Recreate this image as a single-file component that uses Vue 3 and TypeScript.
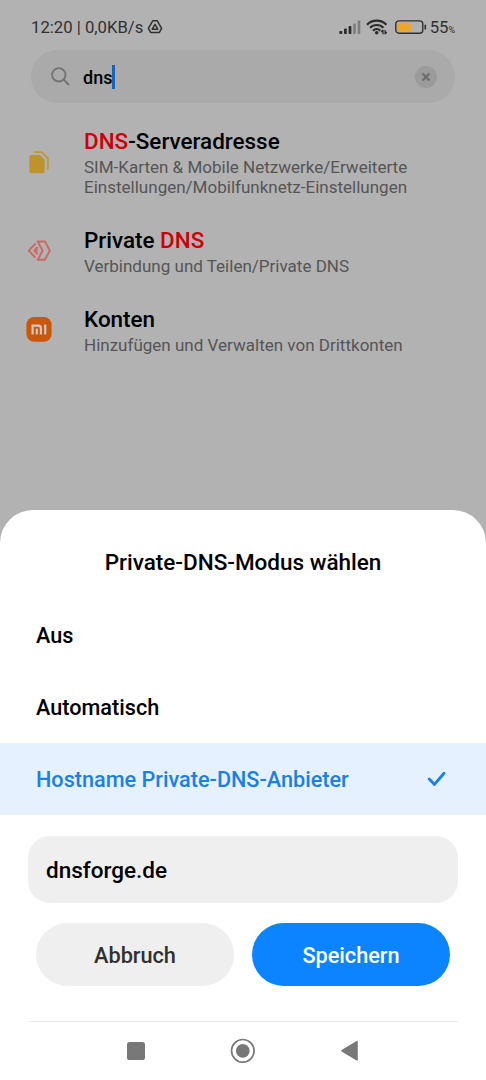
<script setup lang="ts">
import { ref } from 'vue'

interface Part {
  text: string
  hit?: boolean
}
interface Result {
  icon: 'sim' | 'share' | 'mi'
  title: Part[]
  path: string[]
}

const results: Result[] = [
  {
    icon: 'sim',
    title: [{ text: 'DNS', hit: true }, { text: '-Serveradresse' }],
    path: ['SIM-Karten & Mobile Netzwerke/Erweiterte', 'Einstellungen/Mobilfunknetz-Einstellungen'],
  },
  {
    icon: 'share',
    title: [{ text: 'Private ' }, { text: 'DNS', hit: true }],
    path: ['Verbindung und Teilen/Private DNS'],
  },
  {
    icon: 'mi',
    title: [{ text: 'Konten' }],
    path: ['Hinzufügen und Verwalten von Drittkonten'],
  },
]

const modes: string[] = ['Aus', 'Automatisch', 'Hostname Private-DNS-Anbieter']
const selected = ref<number>(2)
</script>

<template>
  <div class="screen">
    <header class="status">
      <span class="clock">12:20 | 0,0KB/s</span>
      <svg class="tri" width="16" height="16" viewBox="0 0 16 16">
        <path d="M5.700 1.800h4.600l4.300 7.600-2.200 4H3.600l-2.200-4z" fill="none" stroke="#303030" stroke-width="1.500" stroke-linejoin="round" />
        <path d="M8 5.400l2.800 4.800H5.200z" fill="none" stroke="#303030" stroke-width="1.500" stroke-linejoin="round" />
      </svg>
      <span class="spacer"></span>
      <svg class="signal" width="22" height="15" viewBox="0 0 22 15">
        <g fill="#2c2c2c">
          <rect x="0.300" y="11" width="3" height="3" rx="0.800" />
          <rect x="5" y="8.500" width="2.800" height="5.500" rx="0.800" />
          <rect x="9.600" y="6" width="2.800" height="8" rx="0.800" />
        </g>
        <g fill="#7c7c7c">
          <rect x="14.200" y="3.500" width="2.600" height="10.500" rx="0.800" />
          <rect x="18.700" y="0.500" width="2.600" height="13.500" rx="0.800" />
        </g>
      </svg>
      <svg class="wifi" width="22" height="16" viewBox="0 0 22 16">
        <g fill="none" stroke="#2c2c2c" stroke-width="2.200">
          <path d="M1 5.700a13.600 13.600 0 0 1 19.400 0" />
          <path d="M4 8.800a9.400 9.400 0 0 1 13.400 0" />
          <path d="M7 11.700a5.300 5.300 0 0 1 7.400 0" />
        </g>
        <circle cx="10.700" cy="13.800" r="1.800" fill="#2c2c2c" />
        <path d="M17 10.900v4.300M15.200 13l1.800-2M19.100 10.900v4.300M19.100 15l1.600-2" fill="none" stroke="#2c2c2c" stroke-width="1.300" />
      </svg>
      <svg class="battery" width="32" height="15" viewBox="0 0 32 15">
        <rect x="0.800" y="0.900" width="27" height="12.400" rx="3.200" fill="none" stroke="#303030" stroke-width="1.400" />
        <rect x="2.600" y="2.800" width="13.400" height="8.600" rx="1.600" fill="#eda62c" />
        <path d="M30.300 5.400v3.600" stroke="#303030" stroke-width="1.600" stroke-linecap="round" />
      </svg>
      <span class="pct">55<small>%</small></span>
    </header>

    <div class="search">
      <svg class="lens" width="20" height="20" viewBox="0 0 20 20">
        <circle cx="7.800" cy="7.800" r="6.700" fill="none" stroke="#747474" stroke-width="1.900" />
        <path d="M12.800 12.800l4.700 4.700" stroke="#747474" stroke-width="2" stroke-linecap="round" />
      </svg>
      <span class="query">dns</span>
      <span class="caret"></span>
      <span class="clear">
        <svg width="10" height="10" viewBox="0 0 10 10">
          <path d="M1.500 1.500l7 7M8.500 1.500l-7 7" stroke="#6a6a6a" stroke-width="2" />
        </svg>
      </span>
    </div>

    <ul class="results">
      <li v-for="(r, i) in results" :key="i" class="result">
        <svg v-if="r.icon === 'sim'" class="icon" width="28" height="28" viewBox="0 0 28 28">
          <path d="M9.200 4.200h7.600l6.100 6.200V20a2 2 0 0 1-.7 1.600" fill="none" stroke="#bd963f" stroke-width="1.700" />
          <path d="M6.700 7h8.400l4.600 4.700V22.900a2.300 2.300 0 0 1-2.300 2.300H6.700a2.300 2.300 0 0 1-2.300-2.300V9.300A2.300 2.300 0 0 1 6.700 7z" fill="#be922d" />
        </svg>
        <svg v-else-if="r.icon === 'share'" class="icon" width="28" height="28" viewBox="0 0 28 28">
          <g fill="none" stroke="#cb6a64" stroke-width="2" stroke-linejoin="round">
            <path d="M12.700 4.400h7.200l4.900 9.200-4.900 9.200h-7.200l4.900-9.200z" />
            <path d="M10.400 6.600L3.800 13.600l6.600 7" />
            <path d="M12.600 10l-3.300 3.600 3.300 3.600" />
          </g>
          <path d="M10 13.600l2.500-2v4z" fill="#cb6a64" />
        </svg>
        <svg v-else class="icon" width="28" height="28" viewBox="0 0 28 28">
          <rect x="1.400" y="1" width="25.200" height="24.800" rx="7.800" fill="#cb580a" />
          <g fill="none" stroke="#cfc8c2" stroke-width="2.200">
            <path d="M7.600 18.400V9.600h5.700a2.600 2.600 0 0 1 2.600 2.600v6.200" />
            <path d="M11.800 12.600v5.800" />
            <path d="M20.200 8.500v9.900" />
          </g>
        </svg>
        <div class="copy">
          <div class="title"><span v-for="(p, j) in r.title" :key="j" :class="{ hit: p.hit }">{{ p.text }}</span></div>
          <div v-for="line in r.path" :key="line" class="path">{{ line }}</div>
        </div>
      </li>
    </ul>

    <section class="sheet">
      <h2>Private-DNS-Modus wählen</h2>
      <div
        v-for="(m, i) in modes"
        :key="m"
        class="mode"
        :class="{ active: i === selected }"
        @click="selected = i"
      >
        <span>{{ m }}</span>
        <svg v-if="i === selected" width="20" height="16" viewBox="0 0 20 16">
          <path d="M2.200 8l5.300 5.400L17 2.300" fill="none" stroke="#1a80e6" stroke-width="2.900" stroke-linecap="round" stroke-linejoin="round" />
        </svg>
      </div>
      <div class="field">dnsforge.de</div>
      <div class="actions">
        <button class="cancel">Abbruch</button>
        <button class="save">Speichern</button>
      </div>
      <nav class="nav">
        <svg width="26" height="26" viewBox="0 0 26 26"><rect x="4" y="4" width="18" height="18" rx="2.600" fill="#787878" /></svg>
        <svg width="26" height="26" viewBox="0 0 26 26">
          <circle cx="12.800" cy="12.800" r="11.300" fill="none" stroke="#787878" stroke-width="1.700" />
          <circle cx="12.800" cy="12.800" r="6.900" fill="#787878" />
        </svg>
        <svg width="26" height="26" viewBox="0 0 26 26"><path d="M5 12.800L20 3.700v18.200z" fill="#787878" stroke="#787878" stroke-width="1.600" stroke-linejoin="round" /></svg>
      </nav>
    </section>
  </div>
</template>

<style>
body {
  margin: 0;
  background: #b2b2b2;
}
</style>

<style scoped>
.screen {
  box-sizing: border-box;
  width: 486px;
  height: 1080px;
  display: flex;
  flex-direction: column;
  background: #b2b2b2;
  font-family: Roboto, "Noto Sans", sans-serif;
  color: #000;
  overflow: hidden;
}
svg {
  display: block;
  flex: none;
}
.status {
  height: 50px;
  box-sizing: border-box;
  padding: 4px 31px 0 31px;
  display: flex;
  align-items: center;
  font-size: 16.7px;
  color: #303030;
  white-space: nowrap;
}
.tri { margin-left: 4px; }
.spacer { flex: 1; }
.signal { margin-right: -1px; }
.wifi { margin-left: 6px; }
.battery { margin-left: 7px; }
.pct { margin-left: 3px; }
.pct small { font-size: 9px; }
.search {
  margin: 0 31px;
  height: 53px;
  flex: none;
  box-sizing: border-box;
  padding: 0 18px 0 20px;
  border-radius: 27px;
  background: #aaa;
  display: flex;
  align-items: center;
}
.query {
  margin-left: 12px;
  padding-top: 1px;
  font-size: 18px;
  font-weight: 500;
}
.caret {
  width: 3px;
  height: 24px;
  background: #1a62b4;
}
.clear {
  width: 22px;
  height: 22px;
  margin-left: auto;
  border-radius: 50%;
  background: #9b9b9b;
  display: flex;
  align-items: center;
  justify-content: center;
}
.results {
  list-style: none;
  margin: 9px 0 0;
  padding: 0;
  flex: 1;
}
.result {
  display: flex;
  align-items: center;
  padding: 16px 25px 13px;
}
.icon {
  margin-top: -3px;
}
.copy {
  margin-left: 31px;
  white-space: nowrap;
}
.title {
  height: 29px;
  line-height: 26px;
  font-size: 22.45px;
  font-weight: 500;
  white-space: pre;
}
.path {
  line-height: 20px;
  font-size: 17.03px;
  color: #555;
}
.path:last-child { margin-bottom: 1px; }
.hit { color: #cb0008; }
.sheet {
  height: 570px;
  flex: none;
  background: #fff;
  border-radius: 33px 33px 0 0;
  display: flex;
  flex-direction: column;
}
h2 {
  margin: 0;
  height: 89px;
  box-sizing: border-box;
  padding-top: 38px;
  line-height: 28px;
  font-size: 22.5px;
  font-weight: 500;
  text-align: center;
}
.mode {
  height: 72px;
  box-sizing: border-box;
  padding: 0 39px 0 36px;
  display: flex;
  align-items: center;
  justify-content: space-between;
  font-size: 21.65px;
  font-weight: 500;
}
.mode.active {
  background: #e5f1ff;
  color: #1a80e6;
}
.field {
  margin: 21px 28px 20px;
  height: 67px;
  box-sizing: border-box;
  padding: 0 18px;
  border-radius: 22px;
  background: #efefef;
  line-height: 69px;
  font-size: 22.5px;
  font-weight: 500;
}
.actions {
  display: grid;
  grid-template-columns: 1fr 1fr;
  gap: 18px;
  margin: 0 36px;
}
button {
  height: 63px;
  border: 0;
  padding: 2px 0 0;
  border-radius: 32px;
  font-family: inherit;
  font-size: 21.7px;
  font-weight: 500;
}
.cancel {
  background: #efefef;
  color: #303030;
}
.save {
  background: #0d84ff;
  color: #fff;
}
.nav {
  margin: 35px 28px 0;
  border-top: 1px solid #ebebeb;
  height: 58px;
  display: flex;
  align-items: center;
  justify-content: center;
  gap: 81px;
}
</style>
